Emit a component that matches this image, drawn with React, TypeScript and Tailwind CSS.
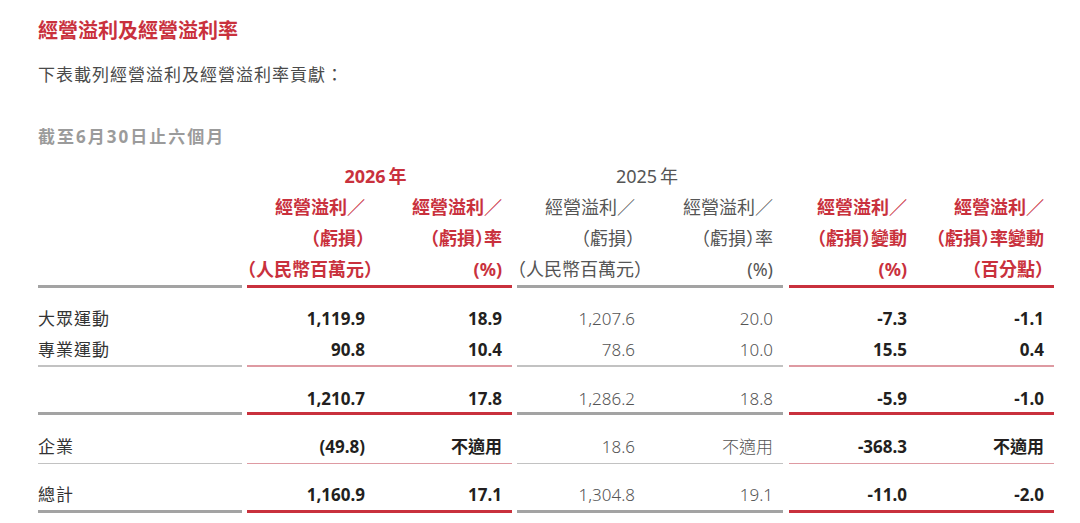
import React from "react";

type Row = string[];

const sectionA: Row[] = [
  ["大眾運動", "1,119.9", "18.9", "1,207.6", "20.0", "-7.3", "-1.1"],
  ["專業運動", "90.8", "10.4", "78.6", "10.0", "15.5", "0.4"],
];
const subtotal: Row = ["", "1,210.7", "17.8", "1,286.2", "18.8", "-5.9", "-1.0"];
const corporate: Row = ["企業", "(49.8)", "不適用", "18.6", "不適用", "-368.3", "不適用"];
const total: Row = ["總計", "1,160.9", "17.1", "1,304.8", "19.1", "-11.0", "-2.0"];

const headA = ["經營溢利／", "（虧損）", "（人民幣百萬元）"];
const headB = ["經營溢利／", "（虧損）率", "(%)"];
const headC = ["經營溢利／", "（虧損）變動", "(%)"];
const headD = ["經營溢利／", "（虧損）率變動", "（百分點）"];

// one data row, label + three groups of two columns
const DataRow = ({ r, h }: { r: Row; h: string }) => (
  <div className={`flex items-center ${h}`}>
    <div className="w-[204px] text-[17px] tracking-[1px] text-[#333]">{r[0]}</div>
    <div className="ml-[5px] flex font-bold text-[#231f20] text-[17px]">
      <div className="w-[128px] pr-[10px] text-right">{r[1]}</div>
      <div className="w-[137px] pr-[10px] text-right">{r[2]}</div>
    </div>
    <div className="ml-[5px] flex font-light text-[#555] text-[17px]">
      <div className="w-[128px] pr-[10px] text-right">{r[3]}</div>
      <div className="w-[138px] pr-[10px] text-right">{r[4]}</div>
    </div>
    <div className="ml-[6px] flex font-bold text-[#231f20] text-[17px]">
      <div className="w-[128px] pr-[10px] text-right">{r[5]}</div>
      <div className="w-[137px] pr-[10px] text-right">{r[6]}</div>
    </div>
  </div>
);

const Rule = ({ thick }: { thick?: boolean }) =>
  thick ? (
    <div className="flex h-[3px]">
      <div className="w-[204px] bg-[#a3a3a3]" />
      <div className="ml-[5px] w-[265px] bg-[#c9313d]" />
      <div className="ml-[5px] w-[266px] bg-[#a3a3a3]" />
      <div className="ml-[6px] w-[265px] bg-[#c9313d]" />
    </div>
  ) : (
    <div className="flex h-[1.5px]">
      <div className="w-[204px] bg-[#c2c2c2]" />
      <div className="ml-[5px] w-[265px] bg-[#de9aa2]" />
      <div className="ml-[5px] w-[266px] bg-[#c2c2c2]" />
      <div className="ml-[6px] w-[265px] bg-[#de9aa2]" />
    </div>
  );

const HeadCell = ({ lines, w, red }: { lines: string[]; w: string; red?: boolean }) => (
  <div
    className={`${w} pr-[10px] text-right text-[18px] leading-[31px] [font-feature-settings:'halt'] ${
      red ? "font-bold text-[#c9313d]" : "text-[#555]"
    }`}
  >
    {lines.map((l, i) => (
      <div key={i} className="whitespace-nowrap">{l}</div>
    ))}
  </div>
);

const App = () => {
  return (
    <div className="w-[1080px] h-[523px] overflow-hidden bg-white pl-[38px] pt-[17px] font-['Noto_Sans','Noto_Sans_CJK_TC',sans-serif]">
      <h1 className="text-[20px] leading-[28px] font-bold text-[#c9313d]">經營溢利及經營溢利率</h1>
      <p className="mt-[18px] text-[17px] leading-[24px] tracking-[1px] text-[#4a4a4a]">
        下表載列經營溢利及經營溢利率貢獻：
      </p>
      <p className="mt-[38px] text-[17px] leading-[24px] tracking-[2px] font-bold text-[#9b9b9b]">截至6月30日止六個月</p>

      {/* header */}
      <div className="mt-[11px] flex">
        <div className="w-[204px]" />
        <div className="ml-[5px] w-[265px]">
          <div className="flex h-[32px] items-center justify-center pr-[8px] text-[18px] font-bold text-[#c9313d]">
            2026<span className="ml-[3px]">年</span>
          </div>
          <div className="flex">
            <HeadCell lines={headA} w="w-[128px]" red />
            <HeadCell lines={headB} w="w-[137px]" red />
          </div>
        </div>
        <div className="ml-[5px] w-[266px]">
          <div className="flex h-[32px] items-center justify-center pr-[6px] text-[18px] text-[#555]">
            2025<span className="ml-[3px]">年</span>
          </div>
          <div className="flex">
            <HeadCell lines={headA} w="w-[128px]" />
            <HeadCell lines={headB} w="w-[138px]" />
          </div>
        </div>
        <div className="ml-[6px] w-[265px]">
          <div className="h-[32px]" />
          <div className="flex">
            <HeadCell lines={headC} w="w-[128px]" red />
            <HeadCell lines={headD} w="w-[137px]" red />
          </div>
        </div>
      </div>
      <Rule thick />

      {/* body */}
      <div className="pt-[15px]">
        {sectionA.map((r, i) => (
          <DataRow key={i} r={r} h="h-[31px]" />
        ))}
      </div>
      <Rule />
      <div className="pt-[19px]">
        <DataRow r={subtotal} h="h-[26px]" />
      </div>
      <Rule thick />
      <div className="pt-[19px] pb-[3px]">
        <DataRow r={corporate} h="h-[26px]" />
      </div>
      <Rule />
      <div className="pt-[18px] pb-[1.5px]">
        <DataRow r={total} h="h-[26px]" />
      </div>
      <Rule thick />
    </div>
  );
};

export default App;
